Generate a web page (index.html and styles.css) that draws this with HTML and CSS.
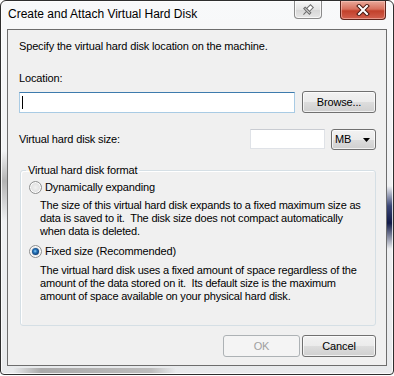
FILE: index.html
```html
<!DOCTYPE html>
<html lang="en">
<head>
<meta charset="UTF-8">
<title>Create and Attach Virtual Hard Disk</title>
<link rel="stylesheet" href="styles.css">
</head>
<body>
<div class="window">
    <div class="titlebar">
        <span class="title">Create and Attach Virtual Hard Disk</span>
        <div class="caption">
            <span class="cap-btn pin">
                <svg width="14" height="14" viewBox="0 0 14 14">
                    <g transform="rotate(45 7 7)">
                        <rect x="5" y="1.5" width="4" height="5.5" fill="#fff" stroke="#6c6c6c"/>
                        <rect x="3" y="7" width="8" height="2" fill="#d8d8d8" stroke="#6c6c6c"/>
                        <line x1="7" y1="9" x2="7" y2="13.5" stroke="#6c6c6c"/>
                    </g>
                </svg>
            </span>
            <span class="cap-btn close">
                <svg width="14" height="12" viewBox="0 0 14 12">
                    <path d="M3 2 L11 10 M11 2 L3 10" stroke="#4a1a12" stroke-width="4" stroke-linecap="square"/>
                    <path d="M3 2 L11 10 M11 2 L3 10" stroke="#fff" stroke-width="2" stroke-linecap="square"/>
                </svg>
            </span>
        </div>
    </div>

    <div class="client">
        <p class="intro">Specify the virtual hard disk location on the machine.</p>
        <label class="field-label">Location:</label>
        <div class="row location-row">
            <div class="textbox focused location"><span class="caret"></span></div>
            <button class="btn browse">Browse...</button>
        </div>
        <div class="row size-row">
            <span class="size-label">Virtual hard disk size:</span>
            <div class="textbox size"></div>
            <div class="btn combo">
                <span>MB</span>
                <svg width="7" height="4" viewBox="0 0 7 4"><path d="M0 0 H7 L3.5 4 Z" fill="#000"/></svg>
            </div>
        </div>

        <fieldset class="group">
            <legend>Virtual hard disk format</legend>
            <div class="option"><span class="radio"></span>Dynamically expanding</div>
            <p class="desc">The size of this virtual hard disk expands to a fixed maximum size as<br>data is saved to it.&nbsp; The disk size does not compact automatically<br>when data is deleted.</p>
            <div class="option second"><span class="radio checked"></span>Fixed size (Recommended)</div>
            <p class="desc">The virtual hard disk uses a fixed amount of space regardless of the<br>amount of the data stored on it.&nbsp; Its default size is the maximum<br>amount of space available on your physical hard disk.</p>
        </fieldset>

        <div class="actions">
            <button class="btn ok" disabled>OK</button>
            <button class="btn cancel">Cancel</button>
        </div>
    </div>
</div>
</body>
</html>
```

FILE: styles.css
```css
body {
    margin: 0;
    background: #fff;
    font-family: "Liberation Sans", Arial, sans-serif;
}

/* window frame (aero basic look) */
.window {
    width: 394px;
    height: 375px;
    box-sizing: border-box;
    border: 1px solid #2e2e2e;
    border-radius: 6px 6px 4px 4px;
    padding: 0 6px 8px;
    display: flex;
    flex-direction: column;
    box-shadow: inset 0 0 0 1px rgba(255, 255, 255, 0.8);
    background:
        linear-gradient(to bottom, transparent 185px, #3a4676 205px, #111a48 222px, transparent 248px) right top / 7px 100% no-repeat,
        linear-gradient(to bottom, transparent 150px, #b4b4b4 180px, transparent 220px) left top / 7px 100% no-repeat,
        linear-gradient(to right, transparent 12px, #a9a9a9 40px, #bcbcbc 150px, transparent 175px) left bottom / 100% 6px no-repeat,
        linear-gradient(#f8f9fa, #e8eaec);
}

.titlebar {
    height: 28px;
    display: flex;
    align-items: flex-start;
}

.title {
    font-size: 12px;
    line-height: 15px;
    margin: 6px 0 0 1px;
    color: #000;
    text-shadow: 0 0 6px #fff;
}

.caption {
    margin-left: auto;
    margin-right: 1px;
    display: flex;
    gap: 18px;
}

.cap-btn {
    display: flex;
    align-items: center;
    justify-content: center;
    box-sizing: border-box;
    border-radius: 0 0 4px 4px;
    border-top: none;
}

.pin {
    width: 28px;
    height: 18px;
    border: 1px solid #8a8a8a;
    border-top: none;
    background: linear-gradient(#f7f7f7, #e3e3e3 50%, #d6d6d6 51%, #e6e6e6);
    box-shadow: inset 0 0 0 1px rgba(255, 255, 255, 0.7);
}

.close {
    width: 46px;
    height: 19px;
    border: 1px solid #5e241b;
    border-top: none;
    background: linear-gradient(#e9a99a, #d8705d 45%, #c2412b 55%, #d2604e);
    box-shadow: inset 0 0 0 1px rgba(255, 210, 200, 0.5);
}

/* client area */
.client {
    flex: 1;
    border: 1px solid #6d6d6d;
    background: #f0f0f0;
    padding: 10px 10px 0 11px;
    font-size: 11px;
    line-height: 13px;
    letter-spacing: -0.15px;
    color: #000;
}

.intro {
    margin: 0;
}

.field-label {
    display: block;
    margin-top: 19px;
}

.row {
    display: flex;
}

.location-row {
    margin-top: 6px;
    gap: 7px;
}

.size-row {
    margin-top: 16px;
    gap: 6px;
    align-items: flex-start;
}

.size-label {
    flex: 1;
    line-height: 21px;
}

.textbox {
    box-sizing: border-box;
    background: #fff;
    border: 1px solid #dfe2e7;
    border-top-color: #c9ccd2;
}

.textbox.focused {
    border-color: #a9cbe4;
    border-top-color: #3d7bad;
}

.location {
    width: 276px;
    height: 21px;
    margin-top: 1px;
    padding: 3px 0 0 2px;
}

.caret {
    display: block;
    width: 1px;
    height: 13px;
    background: #000;
}

.size {
    width: 75px;
    height: 20px;
}

/* push buttons */
.btn {
    box-sizing: border-box;
    height: 22px;
    padding: 0;
    border: 1px solid #707070;
    border-radius: 3px;
    background: linear-gradient(#f2f2f2 0%, #ebebeb 50%, #dddddd 51%, #cfcfcf 100%);
    box-shadow: inset 0 0 0 1px rgba(255, 255, 255, 0.7);
    font-family: "Liberation Sans", Arial, sans-serif;
    font-size: 11px;
    letter-spacing: -0.15px;
    color: #000;
}

.browse {
    width: 74px;
}

.combo {
    width: 45px;
    height: 21px;
    display: flex;
    align-items: center;
    justify-content: space-between;
    padding: 0 5px 0 3px;
}

/* group box */
.group {
    margin: 14px 0 0 1px;
    width: 356px;
    box-sizing: border-box;
    border: 1px solid #d5dfe5;
    border-radius: 3px;
    padding: 4px 8px 22px 8px;
    box-shadow: inset 1px 1px 0 #fff;
}

.group legend {
    padding: 0 2px;
    margin-left: -3px;
    line-height: 13px;
}

.option {
    display: flex;
    align-items: center;
    height: 13px;
}

.option.second {
    margin-top: 7px;
}

.radio {
    width: 13px;
    height: 13px;
    box-sizing: border-box;
    border-radius: 50%;
    border: 1px solid #8e8f8f;
    background: radial-gradient(circle at 50% 50%, #f2f2f2 0, #e2e2e2 55%, #cfd0d2 100%);
    box-shadow: inset 0 0 0 1px #fff;
    margin-right: 3px;
    display: flex;
    align-items: center;
    justify-content: center;
}

.radio.checked::after {
    content: "";
    width: 7px;
    height: 7px;
    border-radius: 50%;
    background: radial-gradient(circle at 45% 45%, #8fd0f5 0, #2a78bd 30%, #124a86 60%, #0a2f5c 100%);
}

.desc {
    margin: 5px 0 0 11px;
    letter-spacing: -0.2px;
}

.desc + .option {
    margin-top: 7px;
}

.option.second + .desc {
    margin-top: 6px;
}

.actions {
    margin-top: 9px;
    display: flex;
    justify-content: flex-end;
    gap: 2px;
}

.ok {
    width: 77px;
    border-color: #adb2b5;
    background: #f4f4f4;
    box-shadow: none;
    color: #a0a0a0;
}

.cancel {
    width: 74px;
}
```
